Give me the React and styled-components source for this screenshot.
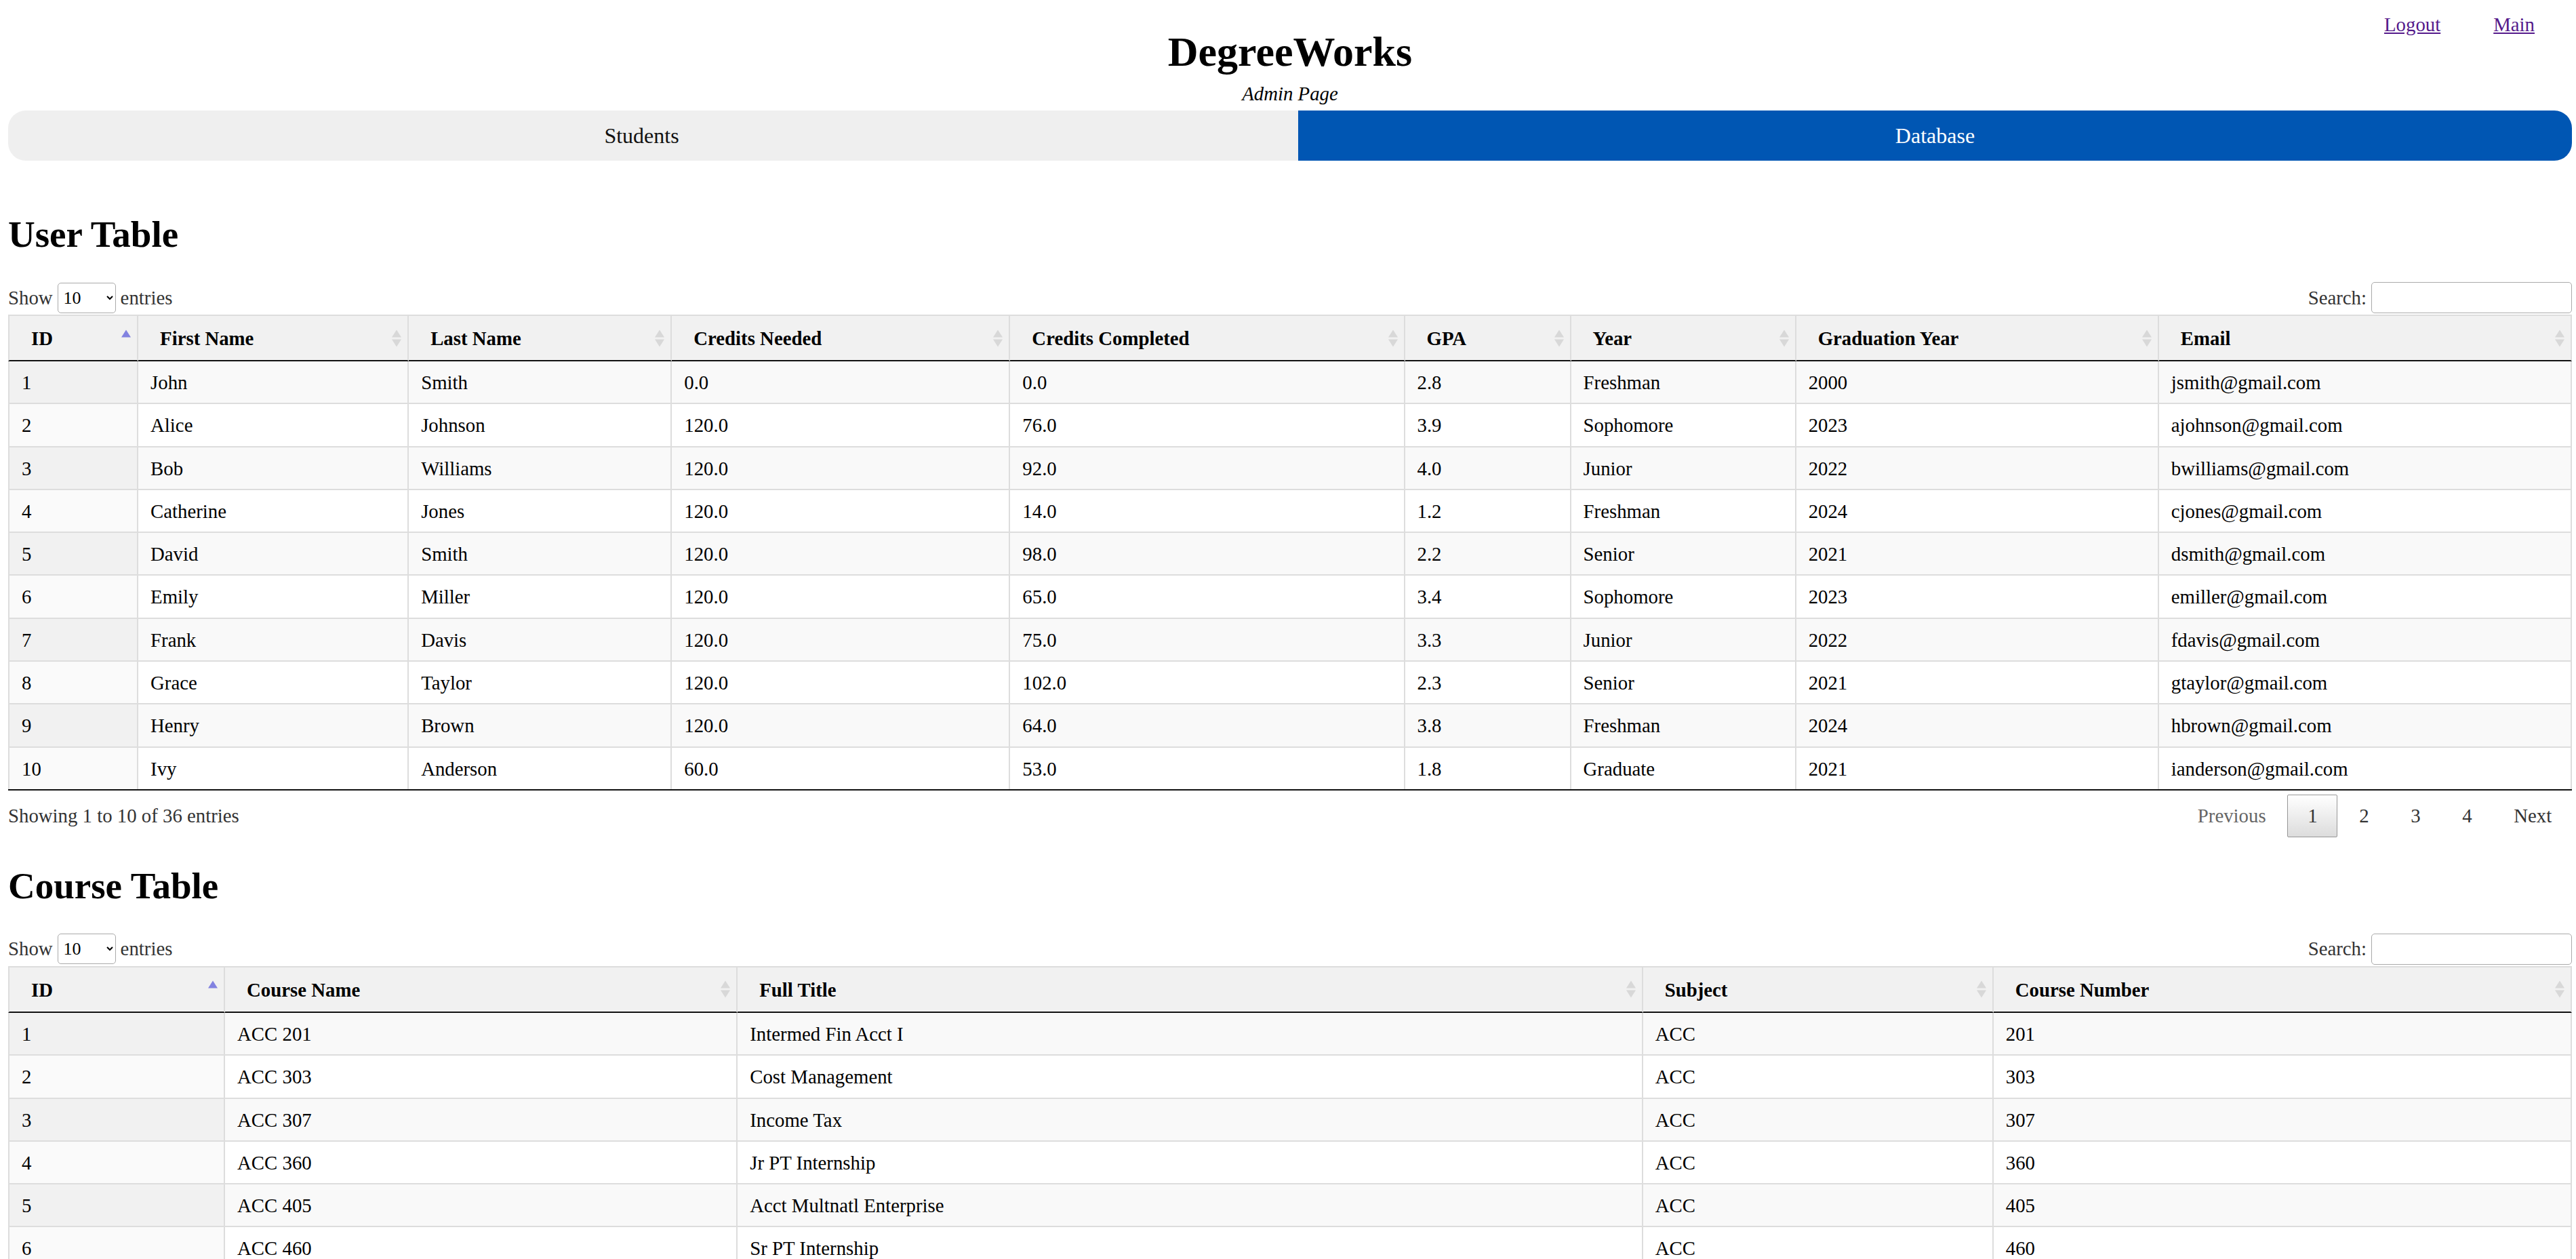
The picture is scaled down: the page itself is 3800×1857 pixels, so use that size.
import React from 'react';
import styled, { createGlobalStyle } from 'styled-components';

const users = [
  [1, 'John', 'Smith', '0.0', '0.0', '2.8', 'Freshman', '2000', 'jsmith@gmail.com'],
  [2, 'Alice', 'Johnson', '120.0', '76.0', '3.9', 'Sophomore', '2023', 'ajohnson@gmail.com'],
  [3, 'Bob', 'Williams', '120.0', '92.0', '4.0', 'Junior', '2022', 'bwilliams@gmail.com'],
  [4, 'Catherine', 'Jones', '120.0', '14.0', '1.2', 'Freshman', '2024', 'cjones@gmail.com'],
  [5, 'David', 'Smith', '120.0', '98.0', '2.2', 'Senior', '2021', 'dsmith@gmail.com'],
  [6, 'Emily', 'Miller', '120.0', '65.0', '3.4', 'Sophomore', '2023', 'emiller@gmail.com'],
  [7, 'Frank', 'Davis', '120.0', '75.0', '3.3', 'Junior', '2022', 'fdavis@gmail.com'],
  [8, 'Grace', 'Taylor', '120.0', '102.0', '2.3', 'Senior', '2021', 'gtaylor@gmail.com'],
  [9, 'Henry', 'Brown', '120.0', '64.0', '3.8', 'Freshman', '2024', 'hbrown@gmail.com'],
  [10, 'Ivy', 'Anderson', '60.0', '53.0', '1.8', 'Graduate', '2021', 'ianderson@gmail.com']
];

const courses = [
  [1, 'ACC 201', 'Intermed Fin Acct I', 'ACC', '201'],
  [2, 'ACC 303', 'Cost Management', 'ACC', '303'],
  [3, 'ACC 307', 'Income Tax', 'ACC', '307'],
  [4, 'ACC 360', 'Jr PT Internship', 'ACC', '360'],
  [5, 'ACC 405', 'Acct Multnatl Enterprise', 'ACC', '405'],
  [6, 'ACC 460', 'Sr PT Internship', 'ACC', '460'],
  [7, 'ACC 470', 'Auditing', 'ACC', '470'],
  [8, 'ACC 480', 'Advanced Accounting', 'ACC', '480'],
  [9, 'ACC 490', 'Accounting Theory', 'ACC', '490'],
  [10, 'ACC 495', 'Accounting Seminar', 'ACC', '495']
];

const userColumns = [
  ['ID', 192],
  ['First Name', 399],
  ['Last Name', 388],
  ['Credits Needed', 499],
  ['Credits Completed', 582],
  ['GPA', 245],
  ['Year', 332],
  ['Graduation Year', 535],
  ['Email', 609]
];

const courseColumns = [
  ['ID', 320],
  ['Course Name', 756],
  ['Full Title', 1335],
  ['Subject', 517],
  ['Course Number', 853]
];

const GlobalStyle = createGlobalStyle`
  * { box-sizing: border-box; }
  html, body { margin: 0; padding: 0; background: #fff; }
  body {
    font-family: "Liberation Serif", "Times New Roman", serif;
    font-size: 28.8px;
    color: #000;
  }
`;

function SortIcon({ active }) {
  return (
    <SortMark width="14" height="27" viewBox="0 0 14 27">
      <polygon points="7,1 14,12 0,12" fill={active ? '#8282e0' : '#d8d8d8'} />
      {!active && <polygon points="0,15 14,15 7,26" fill="#d8d8d8" />}
    </SortMark>
  );
}

function DataTable({ title, columns, rows, top }) {
  const total = columns.reduce((sum, c) => sum + c[1], 0);
  return (
    <Section $top={top}>
      <SectionTitle>{title}</SectionTitle>
      <Controls>
        <Label>
          Show
          <LengthSelect defaultValue="10">
            <option value="10">10</option>
            <option value="25">25</option>
            <option value="50">50</option>
            <option value="100">100</option>
          </LengthSelect>
          entries
        </Label>
        <Label>
          Search:
          <SearchInput type="search" />
        </Label>
      </Controls>
      <Table>
        <colgroup>
          {columns.map(([name, w]) => (
            <col key={name} style={{ width: `${(w / total) * 100}%` }} />
          ))}
        </colgroup>
        <thead>
          <tr>
            {columns.map(([name], i) => (
              <Th key={name}>
                {name}
                <SortIcon active={i === 0} />
              </Th>
            ))}
          </tr>
        </thead>
        <tbody>
          {rows.map((row) => (
            <Row key={row[0]}>
              {row.map((cell, i) => (
                <Td key={i}>{cell}</Td>
              ))}
            </Row>
          ))}
        </tbody>
      </Table>
      <Footer>
        <Info>Showing 1 to 10 of 36 entries</Info>
        <Paginate>
          <PageButton $disabled>Previous</PageButton>
          <PageButton $current>1</PageButton>
          <PageButton>2</PageButton>
          <PageButton>3</PageButton>
          <PageButton>4</PageButton>
          <PageButton>Next</PageButton>
        </Paginate>
      </Footer>
    </Section>
  );
}

export default function App() {
  return (
    <Page>
      <GlobalStyle />
      <Header>
        <TitleBlock>
          <Title>DegreeWorks</Title>
          <Subtitle>Admin Page</Subtitle>
        </TitleBlock>
        <NavLinks>
          <NavLink href="#logout">Logout</NavLink>
          <NavLink href="#main">Main</NavLink>
        </NavLinks>
      </Header>

      <TabBar>
        <Tab $grow={1869} $shift={34} type="button">Students</Tab>
        <Tab $grow={1879} $active type="button">Database</Tab>
      </TabBar>

      <DataTable title="User Table" columns={userColumns} rows={users} top={77} />
      <DataTable title="Course Table" columns={courseColumns} rows={courses} top={40} />
    </Page>
  );
}

const Page = styled.div`
  padding: 0 6px 40px 12px;
`;

const Header = styled.header`
  display: grid;
  grid-template-columns: 1fr auto 1fr;
`;

const TitleBlock = styled.div`
  grid-column: 2;
  padding-top: 41px;
  text-align: center;
`;

const Title = styled.h1`
  margin: 0;
  font-size: 62px;
  line-height: 71px;
  font-weight: bold;
`;

const Subtitle = styled.div`
  margin-top: 10px;
  font-style: italic;
  line-height: 33px;
`;

const NavLinks = styled.nav`
  grid-column: 3;
  justify-self: end;
  align-self: start;
  display: flex;
  gap: 78px;
  padding-top: 20px;
  margin-right: 55px;
`;

const NavLink = styled.a`
  color: #551a8b;
  text-decoration: underline;
  line-height: 33px;
`;

const TabBar = styled.div`
  display: flex;
  margin-top: 8px;
  height: 74px;
  border-radius: 26px;
  overflow: hidden;
`;

const Tab = styled.button`
  flex: ${(p) => p.$grow} 1 0;
  margin: 0;
  border: 0;
  padding: 0 ${(p) => p.$shift || 0}px 0 0;
  font-family: inherit;
  font-size: 32px;
  display: flex;
  align-items: center;
  justify-content: center;
  background: ${(p) => (p.$active ? '#0056b3' : '#efefef')};
  color: ${(p) => (p.$active ? '#fff' : '#111')};
  cursor: pointer;
`;

const Section = styled.section`
  margin-top: ${(p) => p.$top}px;
`;

const SectionTitle = styled.h2`
  margin: 0;
  font-size: 55px;
  line-height: 63px;
  font-weight: bold;
`;

const Controls = styled.div`
  display: flex;
  justify-content: space-between;
  align-items: center;
  margin-top: 38px;
  height: 46px;
  color: #333;
`;

const Label = styled.label`
  display: flex;
  align-items: center;
  gap: 7px;
  line-height: 33px;
  padding-top: 2px;
`;

const LengthSelect = styled.select`
  width: 86px;
  height: 45px;
  padding: 0 4px;
  font-family: inherit;
  font-size: 26px;
  color: #000;
  background: #fff;
  border: 1px solid #aaa;
  border-radius: 5px;
`;

const SearchInput = styled.input`
  width: 296px;
  height: 46px;
  padding: 0 8px;
  font: inherit;
  background: #fff;
  border: 1px solid #aaa;
  border-radius: 5px;
`;

const Table = styled.table`
  width: 100%;
  margin-top: 3px;
  table-layout: fixed;
  border-collapse: separate;
  border-spacing: 0;
  border-bottom: 2px solid #111;
`;

const Th = styled.th`
  position: relative;
  padding: 17px 32px 15px;
  line-height: 33px;
  text-align: left;
  font-weight: bold;
  white-space: nowrap;
  background: #f1f1f1;
  border-top: 2px solid #ddd;
  border-right: 2px solid #ddd;
  border-bottom: 2px solid #111;
  &:first-child {
    border-left: 2px solid #ddd;
  }
`;

const SortMark = styled.svg`
  position: absolute;
  right: 9px;
  top: 50%;
  transform: translateY(-50%);
`;

const Td = styled.td`
  padding: 15px 18px 13.3px;
  line-height: 33px;
  white-space: nowrap;
  border-top: 2px solid #ddd;
  border-right: 2px solid #ddd;
  background: #fff;
  &:first-child {
    border-left: 2px solid #ddd;
    background: #fafafa;
  }
`;

const Row = styled.tr`
  &:first-child ${Td} {
    border-top: none;
  }
  &:nth-child(odd) ${Td} {
    background: #f9f9f9;
  }
  &:nth-child(odd) ${Td}:first-child {
    background: #f1f1f1;
  }
`;

const Footer = styled.div`
  display: flex;
  justify-content: space-between;
  align-items: flex-start;
`;

const Info = styled.div`
  padding-top: 21px;
  line-height: 33px;
  color: #333;
`;

const Paginate = styled.div`
  display: flex;
  padding-top: 6px;
`;

const PageButton = styled.span`
  margin-left: 2px;
  padding: 14px 28.8px;
  line-height: 33px;
  text-align: center;
  border-radius: 2px;
  border: 1px solid ${(p) => (p.$current ? '#979797' : 'transparent')};
  background: ${(p) =>
    p.$current ? 'linear-gradient(to bottom, #fff 0%, #dcdcdc 100%)' : 'transparent'};
  color: ${(p) => (p.$disabled ? '#666' : '#333')};
  cursor: ${(p) => (p.$disabled ? 'default' : 'pointer')};
`;
